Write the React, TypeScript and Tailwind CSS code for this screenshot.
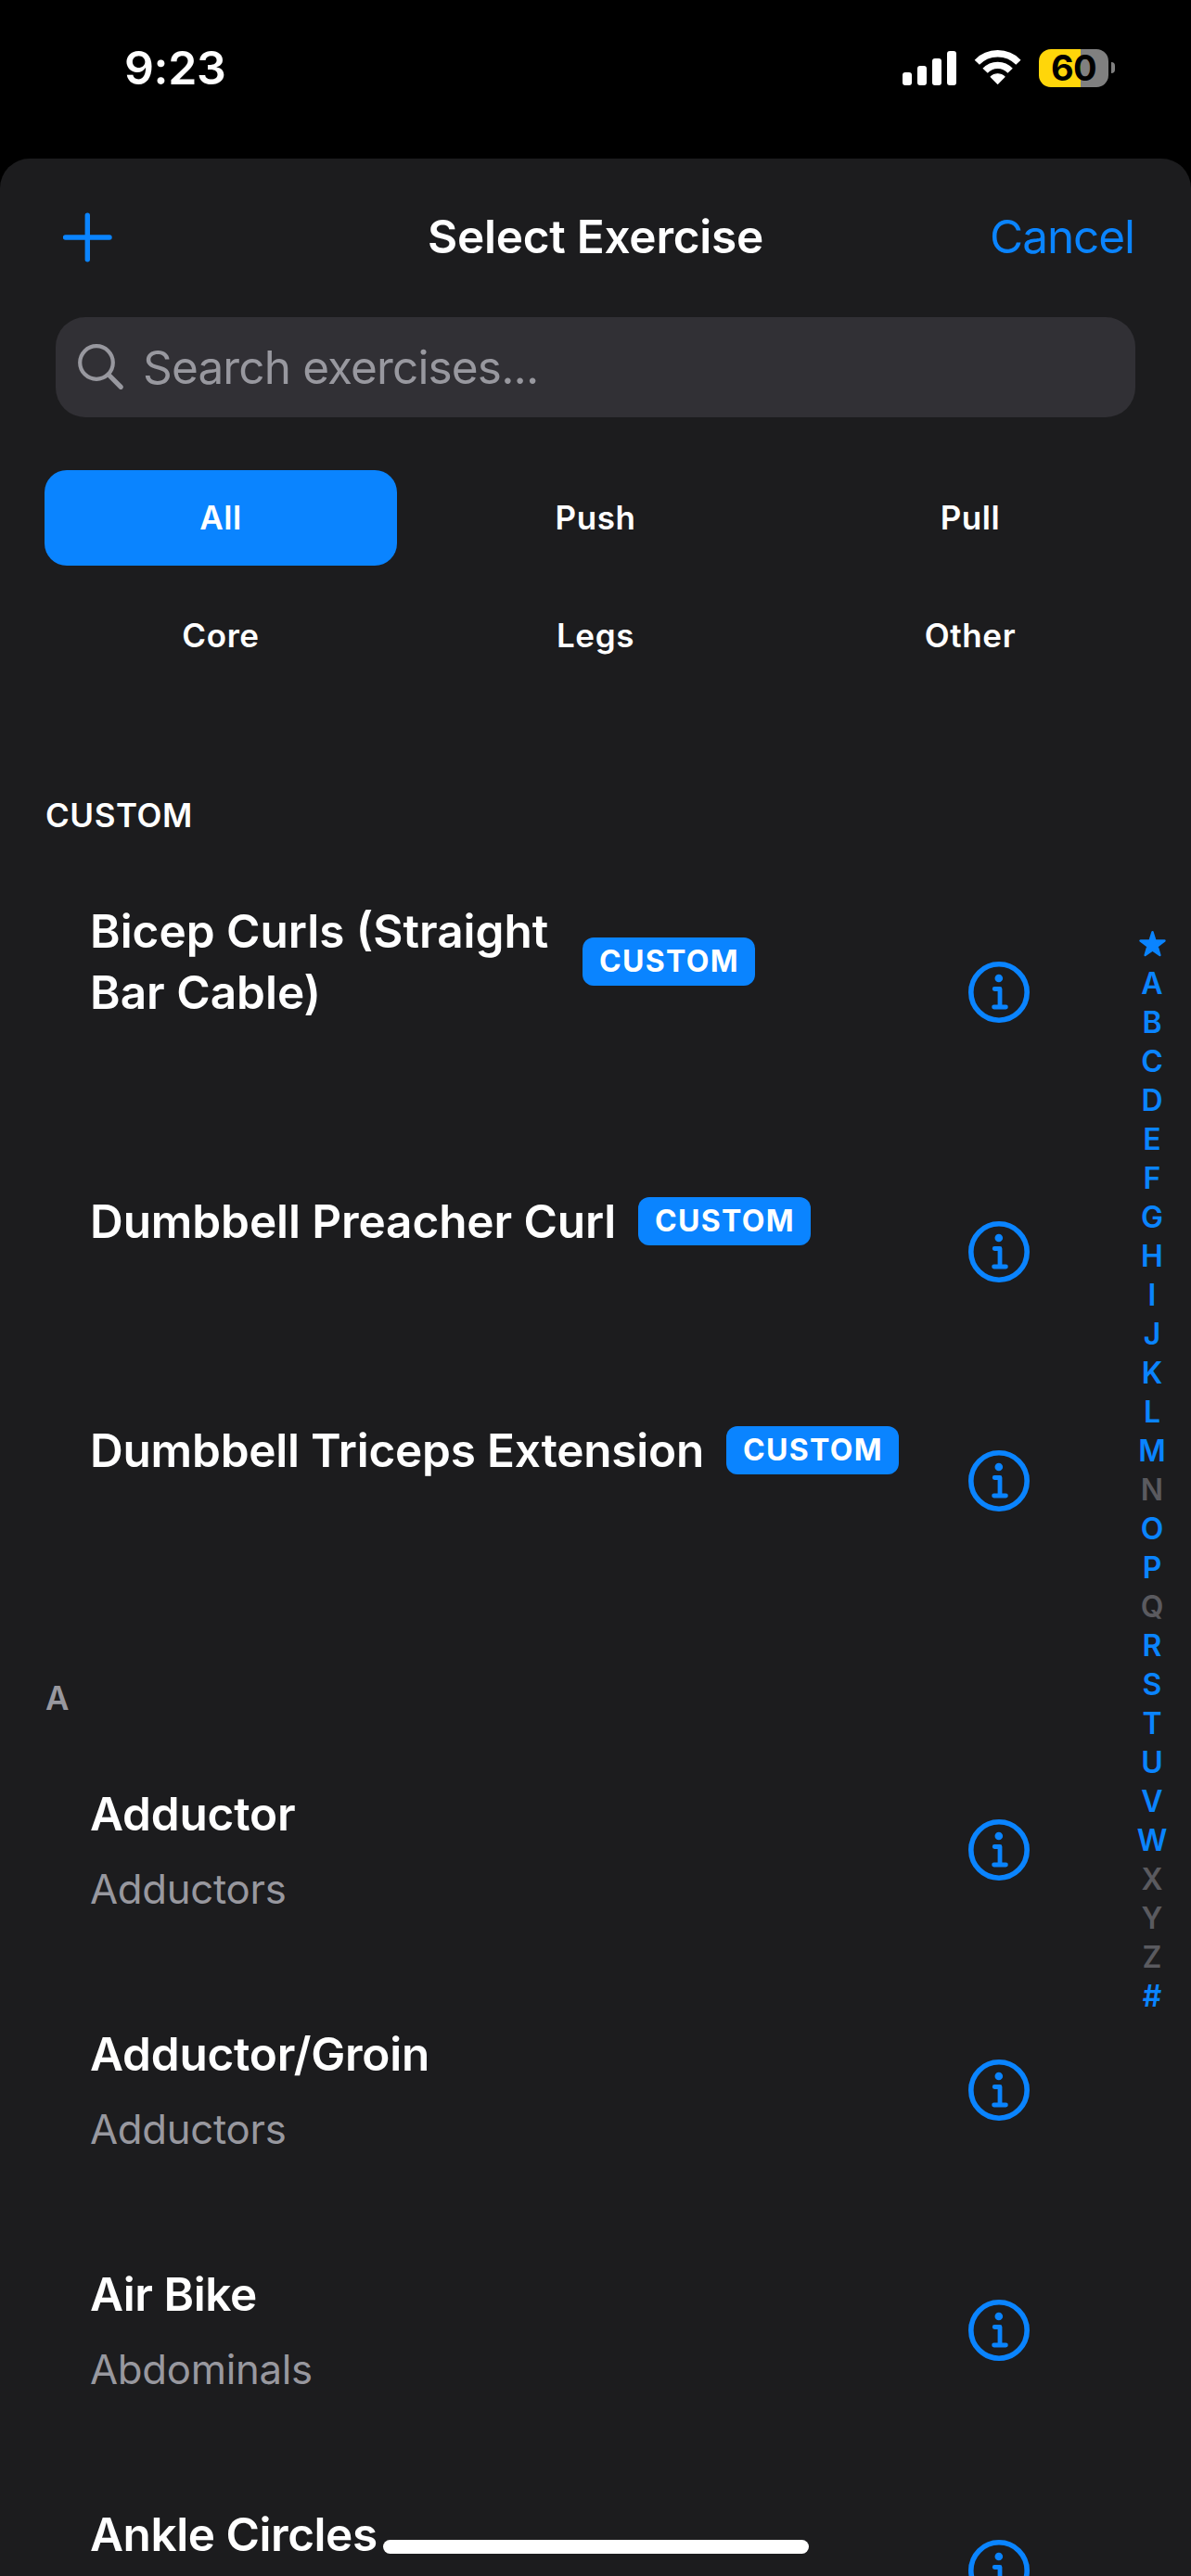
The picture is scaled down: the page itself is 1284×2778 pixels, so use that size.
import React from "react";

type Exercise = {
  name: string;
  muscle?: string;
  custom?: boolean;
  row: string;
  title: string;
};

const FILTERS = ["All", "Push", "Pull", "Core", "Legs", "Other"];

const CUSTOM_EXERCISES: Exercise[] = [
  { name: "Bicep Curls (Straight Bar Cable)", custom: true, row: "h-[312px]", title: "w-[507px]" },
  { name: "Dumbbell Preacher Curl", custom: true, row: "h-[248px]", title: "w-[567px] whitespace-nowrap tracking-[-0.1px]" },
  { name: "Dumbbell Triceps Extension", custom: true, row: "h-[246px]", title: "w-[662px] whitespace-nowrap tracking-[-0.22px]" },
];

const A_EXERCISES: Exercise[] = [
  { name: "Adductor", muscle: "Adductors", row: "h-[259px]", title: "tracking-[-0.2px]" },
  { name: "Adductor/Groin", muscle: "Adductors", row: "h-[259px]", title: "tracking-[-0.22px]" },
  { name: "Air Bike", muscle: "Abdominals", row: "h-[259px]", title: "tracking-[-0.42px]" },
  { name: "Ankle Circles", muscle: "\u00a0", row: "h-[259px]", title: "tracking-[-0.44px]" },
];

const INDEX = "ABCDEFGHIJKLMNOPQRSTUVWXYZ#".split("");
const EMPTY_LETTERS = ["N", "Q", "X", "Y", "Z"];

function InfoIcon() {
  return (
    <svg className="h-[66px] w-[66px]" viewBox="0 0 66 66" fill="none" stroke="#0a84ff" strokeLinecap="round" strokeLinejoin="round">
      <circle cx="33" cy="33" r="30.2" strokeWidth="5.6" />
      <circle cx="32.8" cy="18" r="4.3" fill="#0a84ff" stroke="none" />
      <path d="M28.2 29.5H34V48.8M27.6 49H40.4" strokeWidth="4.8" />
    </svg>
  );
}

function StatusBar() {
  return (
    <div className="flex h-[146px] items-center justify-between pl-[134px] pr-[82px]">
      <span className="text-[50px] font-semibold leading-none tracking-[-0.36px] text-white">9:23</span>
      <div className="flex items-center">
        <div className="flex h-[37px] items-end gap-[6px]">
          <div className="h-[14px] w-[10px] rounded-[3px] bg-white" />
          <div className="h-[21px] w-[10px] rounded-[3px] bg-white" />
          <div className="h-[29px] w-[10px] rounded-[3px] bg-white" />
          <div className="h-[37px] w-[10px] rounded-[3px] bg-white" />
        </div>
        <svg className="ml-[19px] h-[38px] w-[52px]" viewBox="0 0 52 38" fill="none" stroke="#fff" strokeWidth="7.3">
          <path d="M3.3 13.2A31 31 0 0 1 47.9 13.2" />
          <path d="M12.1 22.3A18.3 18.3 0 0 1 39.1 22.3" />
          <path d="M18.2 28.8A10.5 10.5 0 0 1 33 28.8L25.6 36.4Z" fill="#fff" strokeWidth="1.2" strokeLinejoin="round" />
        </svg>
        <div className="ml-[18px] flex h-[41px] w-[75px] items-center justify-center rounded-[13px] bg-linear-to-r from-[#ffd60a] from-60% to-[#808080] to-60%">
          <span className="text-[38px] font-bold leading-none tracking-[-0.68px] text-black">60</span>
        </div>
        <div className="ml-[3px] h-[12px] w-[4px] rounded-r-full bg-[#808080]" />
      </div>
    </div>
  );
}

function ExerciseRow({ exercise }: { exercise: Exercise }) {
  return (
    <li className={`flex items-center justify-between pl-[97px] pr-[174px] ${exercise.row}`}>
      <div className="flex flex-col">
        <div className="flex items-center gap-[24px]">
          <h3 className={`text-[49.5px] font-semibold leading-[66px] text-white ${exercise.title}`}>{exercise.name}</h3>
          {exercise.custom && (
            <span className="flex h-[52px] w-[186px] items-center justify-center rounded-[12px] bg-[#0a84ff] pl-[1px] text-[32px] font-bold leading-none tracking-[1.33px] text-white">
              CUSTOM
            </span>
          )}
        </div>
        {exercise.muscle ? (
          <p className="pt-[19px] text-[43.7px] leading-[59px] tracking-[-0.28px] text-[#98989f]">{exercise.muscle}</p>
        ) : (
          <div className="h-[66px]" />
        )}
      </div>
      <InfoIcon />
    </li>
  );
}

export default function App() {
  return (
    <div className="relative flex h-[2778px] w-[1284px] flex-col overflow-hidden bg-black font-[Inter,sans-serif]">
      <div className="h-[171px] shrink-0">
        <StatusBar />
      </div>

      <main className="relative min-h-0 flex-1 overflow-hidden rounded-t-[32px] bg-[#1c1c1e]">
        <header className="grid h-[168px] grid-cols-3 items-center px-[67px]">
          <svg className="mt-[2px] h-[54px] w-[54px]" viewBox="0 0 54 54" fill="none" stroke="#0a84ff" strokeWidth="5.4" strokeLinecap="round">
            <path d="M27.3 3.3V50.7M3.6 27H51" />
          </svg>
          <h1 className="whitespace-nowrap text-center text-[49.5px] font-semibold tracking-[-0.24px] text-white">Select Exercise</h1>
          <button className="-mr-[6px] text-right text-[49.5px] tracking-[-1.07px] text-[#0a84ff]">Cancel</button>
        </header>

        <div className="mx-[60px] mt-[3px] flex h-[108px] items-center rounded-[32px] bg-[#313035] pl-[24px]">
          <svg className="h-[50px] w-[50px]" viewBox="0 0 50 50" fill="none" stroke="#98989f" strokeLinecap="round">
            <circle cx="20" cy="20" r="17.8" strokeWidth="4.2" />
            <path d="M33 33L46.3 46.3" strokeWidth="5.2" />
          </svg>
          <span className="ml-[20px] mt-[2px] text-[49.5px] leading-none tracking-[-0.86px] text-[#98989f]">Search exercises...</span>
        </div>

        <div className="mx-[48px] mt-[57px] grid grid-cols-3 gap-[24px]">
          {FILTERS.map((filter) => (
            <button
              key={filter}
              className={`h-[103px] rounded-[24px] text-[35px] font-semibold tracking-[0.6px] text-white ${filter === "All" ? "bg-[#0a84ff]" : ""}`}
            >
              {filter}
            </button>
          ))}
        </div>

        <section>
          <h2 className="mb-[5px] mt-[112px] pl-[49px] text-[35px] font-semibold leading-[60px] tracking-[0.56px] text-white">CUSTOM</h2>
          <ul>
            {CUSTOM_EXERCISES.map((exercise) => (
              <ExerciseRow key={exercise.name} exercise={exercise} />
            ))}
          </ul>
        </section>

        <section>
          <h2 className="mb-[4.5px] mt-[81px] pl-[49px] text-[35px] font-semibold leading-[60px] text-[#98989f]">A</h2>
          <ul>
            {A_EXERCISES.map((exercise) => (
              <ExerciseRow key={exercise.name} exercise={exercise} />
            ))}
          </ul>
        </section>

        <nav className="absolute right-[21px] top-[826px] flex w-[42px] flex-col items-center text-[32px] font-semibold leading-[42px]">
          <div className="mb-[1px] flex h-[42px] items-center">
            <svg className="h-[30px] w-[29px]" viewBox="0 0 29 30" fill="#0a84ff" stroke="#0a84ff" strokeWidth="2.4" strokeLinejoin="round">
              <path d="M14.5 2.2L17.5 11.5H27.5L19.6 17.6L22.4 27L14.5 21.6L6.6 27L9.4 17.6L1.5 11.5H11.5Z" />
            </svg>
          </div>
          {INDEX.map((letter) => (
            <span key={letter} className={EMPTY_LETTERS.includes(letter) ? "text-[#5a5a5f]" : "text-[#0a84ff]"}>
              {letter}
            </span>
          ))}
        </nav>
      </main>

      <div className="absolute bottom-[24px] left-[413px] h-[15px] w-[459px] rounded-full bg-white" />
    </div>
  );
}
